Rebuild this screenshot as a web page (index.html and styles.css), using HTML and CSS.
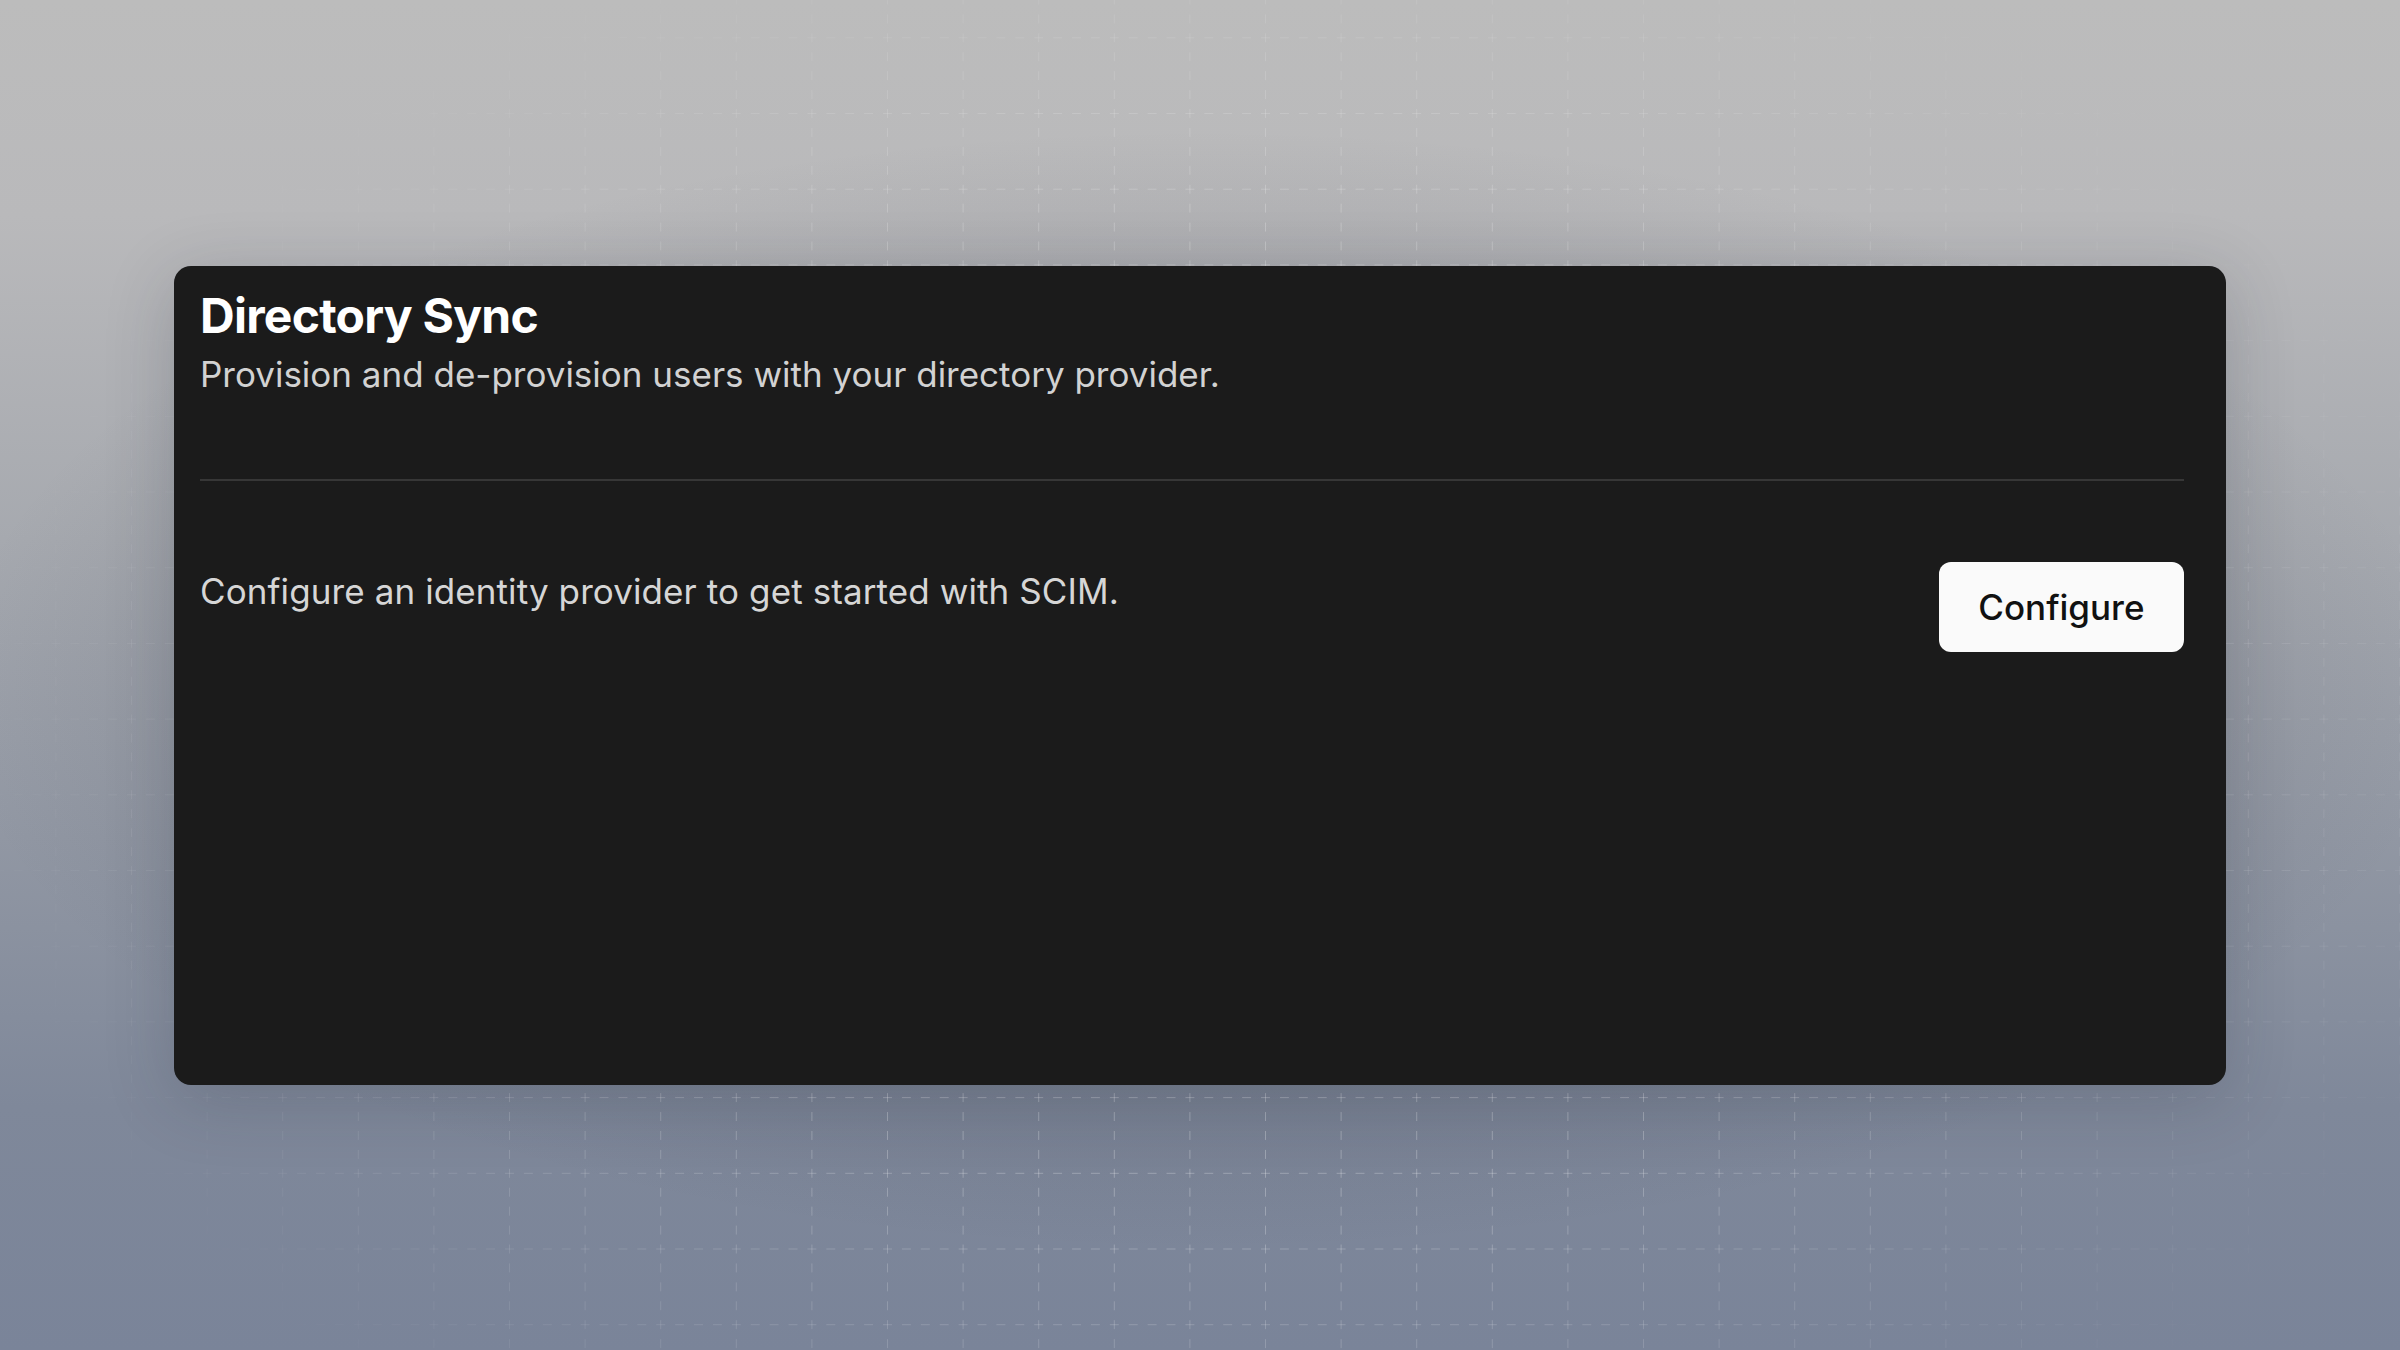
FILE: index.html
```html
<!DOCTYPE html>
<html lang="en">
<head>
<meta charset="utf-8">
<title>Directory Sync</title>
<link rel="stylesheet" href="styles.css">
</head>
<body>
  <div class="grid-layer" aria-hidden="true">
    <svg class="grid-svg" width="2400" height="1350" xmlns="http://www.w3.org/2000/svg">
      <defs>
        <pattern id="cell" x="55.4" y="113" width="75.6" height="75.7" patternUnits="userSpaceOnUse">
          <line x1="0" y1="0" x2="75.6" y2="0" class="dash" />
          <line x1="0" y1="0" x2="0" y2="75.7" class="dash" />
        </pattern>
      </defs>
      <rect width="2400" height="1350" fill="url(#cell)" />
    </svg>
  </div>
  <main class="stage">
    <section class="card">
      <header class="card-head">
        <h1 class="title">Directory Sync</h1>
        <p class="subtitle">Provision and de-provision users with your directory provider.</p>
      </header>
      <div class="row">
        <p class="row-text">Configure an identity provider to get started with SCIM.</p>
        <button class="btn" type="button">Configure</button>
      </div>
    </section>
  </main>
</body>
</html>
```
FILE: styles.css
```css
html, body {
  margin: 0;
  padding: 0;
}

body {
  width: 2400px;
  height: 1350px;
  overflow: hidden;
  position: relative;
  font-family: Inter, "Noto Sans", "Liberation Sans", sans-serif;
  background:
    radial-gradient(ellipse 1250px 560px at 1200px 690px, rgba(40, 44, 58, 0.14) 60%, rgba(40, 44, 58, 0) 100%),
    linear-gradient(180deg, #bcbcbc 0%, #b9b9bb 16%, #a6a9af 40%, #9197a3 62%, #7f889a 82%, #7a8499 100%);
}

.grid-layer {
  position: absolute;
  inset: 0;
  z-index: 0;
  -webkit-mask-image: radial-gradient(ellipse 1300px 900px at 1250px 740px, #000 50%, transparent 100%);
  mask-image: radial-gradient(ellipse 1300px 900px at 1250px 740px, #000 50%, transparent 100%);
}

.grid-svg {
  display: block;
}

.dash {
  stroke: rgba(255, 255, 255, 0.34);
  stroke-width: 1.6;
  stroke-dasharray: 9 9.9;
  stroke-dashoffset: 4;
}

.stage {
  position: relative;
  z-index: 1;
  height: 100%;
  display: flex;
  align-items: center;
  justify-content: center;
}

.card {
  width: 2052px;
  height: 819px;
  box-sizing: border-box;
  background: #1b1b1b;
  border-radius: 17px;
  padding: 21px 42px 0 26px;
  box-shadow: 0 14px 70px rgba(30, 34, 48, 0.2);
}

.card-head {
  padding-bottom: 78px;
  border-bottom: 2px solid #373737;
}

.title {
  margin: 0;
  font-size: 48px;
  line-height: 57.6px;
  font-weight: 700;
  letter-spacing: -0.75px;
  color: #ffffff;
}

.subtitle {
  margin: 4px 0 0;
  font-size: 35px;
  line-height: 52.5px;
  font-weight: 400;
  color: #d2d2d2;
}

.row {
  margin-top: 81px;
  display: flex;
  align-items: flex-start;
  justify-content: space-between;
}

.row-text {
  margin: 0;
  font-size: 35px;
  line-height: 59px;
  font-weight: 400;
  letter-spacing: 0.1px;
  color: #d6d6d6;
}

.btn {
  height: 90px;
  padding: 0 39.5px;
  border: none;
  border-radius: 12px;
  background: #fafafa;
  color: #111111;
  font-family: Inter, "Noto Sans", "Liberation Sans", sans-serif;
  font-size: 35px;
  font-weight: 500;
  line-height: 42px;
  display: flex;
  align-items: center;
  justify-content: center;
}
```
